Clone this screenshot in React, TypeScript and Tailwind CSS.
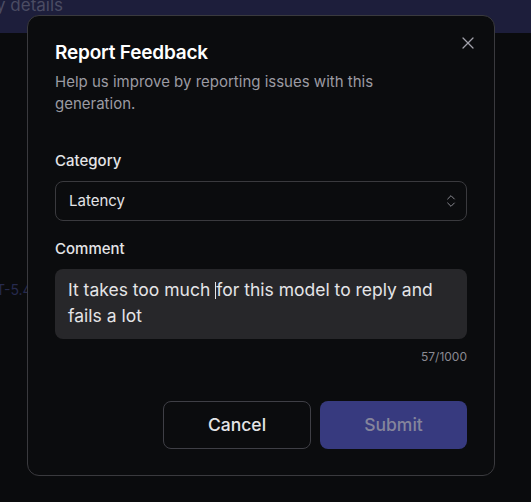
import React, { useState } from 'react';
import { X, ChevronsUpDown } from 'lucide-react';

export default function App() {
    const [category] = useState('Latency');
    const comment = 'It takes too much for this model to reply and fails a lot';
    const before = 'It takes too much ';
    const after = comment.slice(before.length);

    return (
        <div className="relative h-[502px] w-[531px] overflow-hidden bg-[#0a0b0d] font-['Inter',sans-serif]">
            {/* page behind the dialog */}
            <div className="h-[33px] bg-[#1d1e3b] overflow-hidden">
                <div className="-mt-[7px] -ml-[4px] text-[17px] text-[#4b4c63]">y details</div>
            </div>
            <div className="absolute left-[-4px] top-[279px] text-[14px] text-[#262a4d]">T-5.4</div>

            {/* dialog */}
            <div className="absolute left-[27px] top-[15px] w-[468px] rounded-xl border border-[#3a3a3e] bg-[#0b0c0e] px-[27px] pt-[23px] pb-[26px]">
                <button className="absolute right-[16px] top-[17px] text-[#a1a1aa]">
                    <X size={20} strokeWidth={1.5} />
                </button>
                <h2 className="text-[19px] font-semibold leading-[28px] tracking-[-0.2px] text-white">Report Feedback</h2>
                <p className="mt-[4px] w-[340px] text-[15px] leading-[22px] text-[#9b9ba3]">
                    Help us improve by reporting issues with this generation.
                </p>

                <label className="mt-[36px] block text-[15px] font-medium leading-[20px] text-[#e4e4e7]">Category</label>
                <div className="mt-[10px] flex h-[40px] items-center justify-between rounded-lg border border-[#3a3a3e] pl-[13px] pr-[7px]">
                    <span className="text-[15px] text-[#e4e4e7]">{category}</span>
                    <ChevronsUpDown size={16} strokeWidth={1.5} className="text-[#8a8a92]" />
                </div>

                <label className="mt-[18px] block text-[15px] font-medium leading-[20px] text-[#e4e4e7]">Comment</label>
                <div className="mt-[10px] h-[70px] rounded-lg bg-[#27272a] px-[13px] py-[8px] text-[17.5px] leading-[26px] text-[#e4e4e7]">
                    {before}
                    <span className="inline-block h-[17px] w-0 translate-y-[3px] border-l border-[#e4e4e7]"></span>
                    {after}
                </div>
                <div className="mt-[9px] text-right text-[12px] leading-[18px] text-[#8a8a92]">57/1000</div>

                <div className="mt-[35px] flex justify-end gap-[9px]">
                    <button className="h-[48px] w-[148px] rounded-lg border border-[#3f3f46] text-[17.5px] font-medium text-[#e4e4e7]">Cancel</button>
                    <button className="h-[48px] w-[147px] rounded-lg bg-[#373a7f] text-[17.5px] font-medium text-[#85859c]">Submit</button>
                </div>
            </div>
        </div>
    );
}
